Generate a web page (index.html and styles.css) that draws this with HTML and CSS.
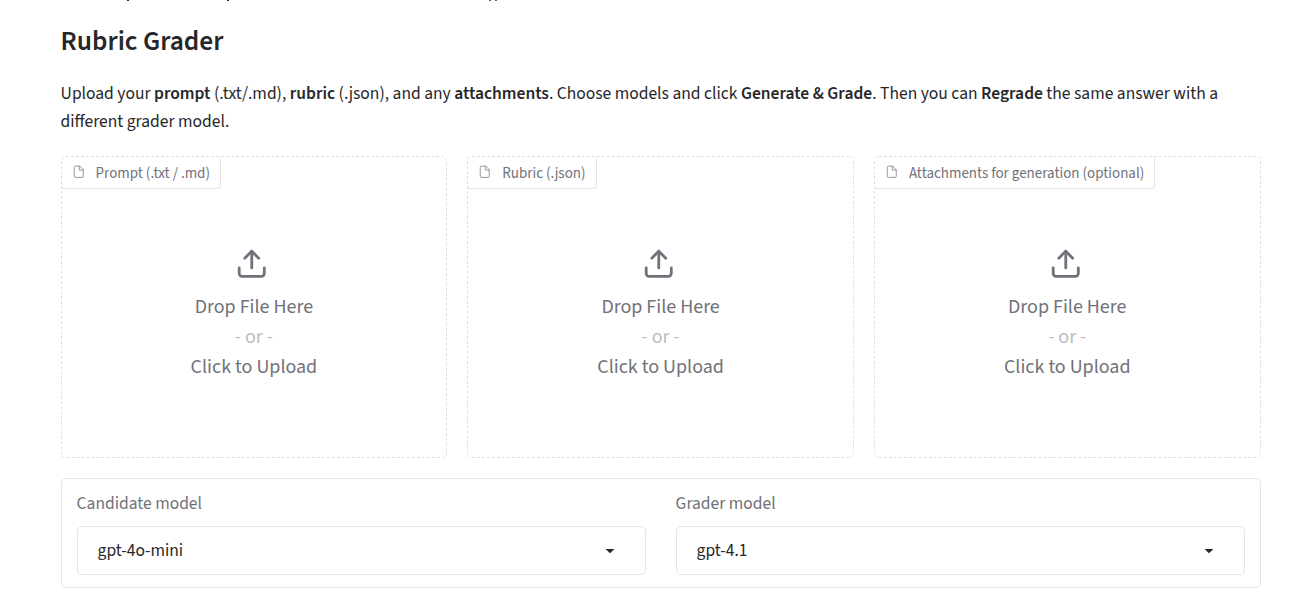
FILE: index.html
```html
<!DOCTYPE html>
<html lang="en">
<head>
<meta charset="utf-8">
<title>Rubric Grader</title>
<link rel="stylesheet" href="styles.css">
</head>
<body>
<svg class="symbols" aria-hidden="true">
  <symbol id="file" viewBox="0 0 24 24"><path d="M13 2H6a2 2 0 0 0-2 2v16a2 2 0 0 0 2 2h12a2 2 0 0 0 2-2V9z"/><path d="M13 2v7h7"/></symbol>
  <symbol id="upload" viewBox="0 0 24 24"><path d="M21 15v4a2 2 0 0 1-2 2H5a2 2 0 0 1-2-2v-4"/><path d="M17 8l-5-5-5 5"/><path d="M12 3v12"/></symbol>
  <symbol id="caret" viewBox="0 0 18 18"><path d="M5 8l4 4 4-4z"/></symbol>
</svg>
<svg class="descenders" viewBox="0 0 1305 1" aria-hidden="true"><path class="ink" d="M127 0h2v1h-2zM227 0h2v1h-2z"/><path class="link" d="M489 0h2v1h-2zM495 0h2v1h-2z"/></svg>
<main class="page">
  <h1 class="title">Rubric Grader</h1>
  <p class="intro">Upload your <strong>prompt</strong> (.txt/.md), <strong>rubric</strong> (.json), and any <strong>attachments</strong>. Choose models and click <strong>Generate &amp; Grade</strong>. Then you can <strong>Regrade</strong> the same answer with a different grader model.</p>
  <section class="uploads">
    <div class="drop">
      <div class="tag"><svg class="file-icon"><use href="#file"/></svg><span>Prompt (.txt / .md)</span></div>
      <div class="drop-body"><svg class="upload-icon"><use href="#upload"/></svg><span>Drop File Here</span><span class="or">- or -</span><span>Click to Upload</span></div>
    </div>
    <div class="drop">
      <div class="tag"><svg class="file-icon"><use href="#file"/></svg><span>Rubric (.json)</span></div>
      <div class="drop-body"><svg class="upload-icon"><use href="#upload"/></svg><span>Drop File Here</span><span class="or">- or -</span><span>Click to Upload</span></div>
    </div>
    <div class="drop">
      <div class="tag"><svg class="file-icon"><use href="#file"/></svg><span>Attachments for generation (optional)</span></div>
      <div class="drop-body"><svg class="upload-icon"><use href="#upload"/></svg><span>Drop File Here</span><span class="or">- or -</span><span>Click to Upload</span></div>
    </div>
  </section>
  <section class="models">
    <div class="field"><div class="label">Candidate model</div><div class="select"><span>gpt-4o-mini</span><svg class="caret"><use href="#caret"/></svg></div></div>
    <div class="field"><div class="label">Grader model</div><div class="select"><span>gpt-4.1</span><svg class="caret"><use href="#caret"/></svg></div></div>
  </section>
</main>
</body>
</html>
```
FILE: styles.css
```css
* { box-sizing: border-box; }
body { margin: 0; background: #fff; color: #27272a; font-family: "Source Sans Pro", "Source Sans 3", "Noto Sans CJK SC", sans-serif; font-size: 17.5px; overflow: hidden; }
.symbols { display: none; }
.descenders { display: block; width: 1305px; height: 1px; }
.ink { fill: #27272a; }
.link { fill: #3d7394; }
.page { width: 1200px; margin-left: 60.6px; padding-top: 22px; }
.title { margin: 0; font-size: 27.4px; line-height: 38px; font-weight: 600; }
.intro { margin: 19px 0 20px; line-height: 28px; }
.intro strong { font-weight: 600; }
.uploads { display: grid; grid-template-columns: repeat(3, 1fr); gap: 20px; }
.drop { height: 302px; border: 1px dashed #e0e0e3; border-radius: 5px; display: flex; flex-direction: column; align-items: flex-start; color: #71717a; }
.tag { height: 32px; display: flex; align-items: center; gap: 10.5px; padding: 2px 10px 0; border: solid #e4e4e7; border-width: 0 1px 1px 0; border-radius: 4px 0 4px 0; font-size: 15px; line-height: 20px; }
.file-icon { width: 13.5px; height: 13.5px; margin-top: -4px; fill: none; stroke: #8b8b93; stroke-width: 1.6; stroke-linecap: round; stroke-linejoin: round; }
.drop-body { align-self: stretch; display: flex; flex-direction: column; align-items: center; padding-top: 58px; font-size: 20px; line-height: 30px; }
.upload-icon { width: 33.5px; height: 33.5px; margin: 0 4px 11.5px 0; fill: none; stroke: #71717a; stroke-width: 2; stroke-linecap: round; stroke-linejoin: round; }
.or { color: #bbbbc2; }
.models { margin-top: 20px; height: 110px; border: 1px solid #e4e4e7; border-radius: 5px; padding: 11px 15px; display: grid; grid-template-columns: 1fr 1fr; gap: 30px; }
.label { color: #71717a; line-height: 28px; margin-bottom: 8px; }
.select { height: 49px; border: 1px solid #e4e4e7; border-radius: 5px; padding: 0 25px 0 20px; display: flex; align-items: center; justify-content: space-between; }
.caret { width: 20px; height: 20px; margin-top: -1px; fill: #27272a; }
```
